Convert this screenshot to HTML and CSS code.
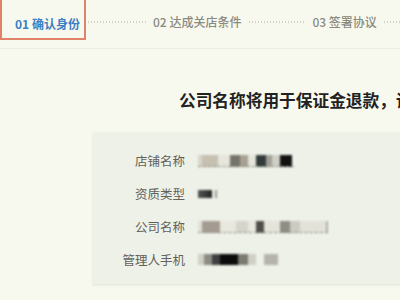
FILE: index.html
```html
<!DOCTYPE html>
<html lang="zh">
<head>
<meta charset="utf-8">
<link rel="stylesheet" href="styles.css">
</head>
<body>
<div class="steps">
  <div class="step active">01 确认身份</div>
  <div class="dots d1"></div>
  <div class="step">02 达成关店条件</div>
  <div class="dots d2"></div>
  <div class="step">03 签署协议</div>
  <div class="dots d3"></div>
</div>
<h1 class="title">公司名称将用于保证金退款，请</h1>
<div class="panel">
  <div class="row"><div class="label">店铺名称</div><div class="value v1"></div></div>
  <div class="row"><div class="label">资质类型</div><div class="value v2"></div></div>
  <div class="row"><div class="label">公司名称</div><div class="value v3"></div></div>
  <div class="row"><div class="label">管理人手机</div><div class="value v4"></div></div>
</div>
</body>
</html>
```
FILE: styles.css
```css
html, body {
  margin: 0;
  padding: 0;
  width: 400px;
  height: 300px;
  overflow: hidden;
  background: #f8f9ee;
  font-family: "Noto Sans CJK SC", "Noto Sans", sans-serif;
}
.steps {
  display: flex;
  align-items: flex-start;
  height: 48px;
  border-bottom: 1px solid #ecede2;
  white-space: nowrap;
}
.steps > * {
  flex-shrink: 0;
}
.step {
  font-size: 12px;
  line-height: 16px;
  font-weight: 500;
  color: #8a8a80;
  margin-top: 14px;
}
.step.active {
  color: #3b80c4;
  font-weight: 700;
  margin-top: -2px;
  box-sizing: border-box;
  width: 86px;
  height: 42px;
  padding: 16px 0 0 13px;
  border: 2px solid #e2826a;
}
.dots {
  height: 2px;
  margin-top: 21px;
  background-image: linear-gradient(to right, #d2d2c6 1px, transparent 1px);
  background-size: 3px 2px;
}
.d1 { width: 58px; margin-left: 2px; margin-right: 7px; }
.d2 { width: 55px; margin-left: 8px; margin-right: 8px; }
.d3 { width: 30px; margin-left: 7px; }
.title {
  margin: 39px 0 0 0;
  padding-left: 179px;
  font-size: 16.7px;
  line-height: 24px;
  font-weight: 700;
  color: #222;
  white-space: nowrap;
}
.panel {
  margin: 20px 0 0 93px;
  width: 400px;
  padding: 12px 0 8px 0;
  background: #eef1e8;
  box-shadow: 0 1px 2px rgba(200, 200, 190, 0.5);
}
.row {
  display: flex;
  align-items: center;
  height: 33px;
}
.label {
  width: 92px;
  text-align: right;
  font-size: 12.5px;
  color: #62625a;
}
.value {
  margin-left: 13px;
  height: 11px;
  filter: blur(0.8px);
  border-bottom: 1px dashed #8a8a80;
}
.v1 {
  width: 96px;
  background: linear-gradient(to right,
    #d8d6cc 0, #d8d6cc 4px, #c6c0b0 4px, #c6c0b0 20px, #e6e6dc 20px, #e6e6dc 32px,
    #76736a 32px, #76736a 42px, #a8a092 42px, #a8a092 50px, #e4e4da 50px, #e4e4da 58px,
    #323a3a 58px, #323a3a 68px, #a0a096 68px, #a0a096 74px, #cfcfc6 74px, #cfcfc6 82px,
    #121212 82px, #121212 94px, transparent 94px);
}
.v2 {
  width: 20px;
  height: 8px;
  border-bottom: none;
  background: linear-gradient(to right, #555 0, #333 10px, #222 14px, transparent 14px, transparent 17px, #999 17px, #999 19px, transparent 19px);
}
.v3 {
  width: 130px;
  background: linear-gradient(to right,
    #e0e0d6 0, #e0e0d6 4px, #a49c92 4px, #a49c92 22px, #e8e8de 22px, #e8e8de 38px,
    #d4d4ca 38px, #d4d4ca 50px, #e8e8de 50px, #e8e8de 58px, #4e4e4a 58px, #4e4e4a 66px,
    #e4e4da 66px, #e4e4da 82px, #8e8e84 82px, #8e8e84 92px, #cbcbc2 92px, #cbcbc2 102px,
    #e2e2d8 102px, #e2e2d8 128px, #b0b0a8 128px);
}
.v4 {
  width: 82px;
  border-bottom: none;
  background: linear-gradient(to right,
    #d0d0c6 0, #d0d0c6 6px, #8c8c84 6px, #8c8c84 14px, #404040 14px, #404040 22px,
    #0c0c0c 22px, #0c0c0c 40px, #7a7a72 40px, #7a7a72 50px, #cfcfc6 50px, #cfcfc6 58px,
    transparent 58px, transparent 66px, #b4b4ac 66px, #b4b4ac 80px, transparent 80px);
}
```
